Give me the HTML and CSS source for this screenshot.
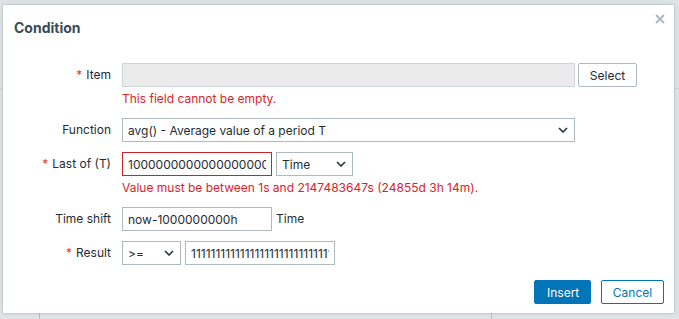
FILE: index.html
```html
<!DOCTYPE html>
<html lang="en">
<head>
    <meta charset="UTF-8">
    <title>Condition</title>
    <link rel="stylesheet" href="styles.css">
</head>
<body>
    <div class="page-bg">
        <div class="bg-rule"></div>
        <div class="bg-col bg-col-left"></div>
        <div class="bg-col bg-col-right"></div>
    </div>

    <div class="modal">
        <div class="modal-head">
            <h4>Condition</h4>
            <button class="close" type="button" title="Close">
                <svg width="10" height="10" viewBox="0 0 10 10">
                    <path d="M1 1 L9 9 M9 1 L1 9" stroke="#aab6bd" stroke-width="1.8" fill="none"/>
                </svg>
            </button>
        </div>

        <form class="form-grid">
            <label class="req">Item</label>
            <div class="field">
                <div class="line">
                    <input class="input input-item" type="text" disabled>
                    <button class="btn-alt btn-select" type="button">Select</button>
                </div>
                <div class="error">This field cannot be empty.</div>
            </div>

            <label>Function</label>
            <div class="field">
                <div class="select select-function">
                    <span>avg() - Average value of a period T</span>
                    <svg class="chev" width="10" height="6" viewBox="0 0 10 6"><path d="M1 1 L5 5 L9 1" stroke="#1f2c33" stroke-width="1.5" fill="none"/></svg>
                </div>
            </div>

            <label class="req">Last of (T)</label>
            <div class="field">
                <div class="line">
                    <input class="input input-short invalid" type="text" value="10000000000000000000000">
                    <div class="select select-time">
                        <span>Time</span>
                        <svg class="chev" width="10" height="6" viewBox="0 0 10 6"><path d="M1 1 L5 5 L9 1" stroke="#1f2c33" stroke-width="1.5" fill="none"/></svg>
                    </div>
                </div>
                <div class="error">Value must be between 1s and 2147483647s (24855d 3h 14m).</div>
            </div>

            <label>Time shift</label>
            <div class="field">
                <div class="line">
                    <input class="input input-short" type="text" value="now-1000000000h">
                    <span class="unit">Time</span>
                </div>
            </div>

            <label class="req">Result</label>
            <div class="field">
                <div class="line">
                    <div class="select select-op">
                        <span>&gt;=</span>
                        <svg class="chev" width="10" height="6" viewBox="0 0 10 6"><path d="M1 1 L5 5 L9 1" stroke="#1f2c33" stroke-width="1.5" fill="none"/></svg>
                    </div>
                    <input class="input input-short" type="text" value="111111111111111111111111111111">
                </div>
            </div>
        </form>

        <div class="modal-foot">
            <button class="btn" type="button">Insert</button>
            <button class="btn-alt btn-cancel" type="button">Cancel</button>
        </div>
    </div>
</body>
</html>
```

FILE: styles.css
```css
body {
    margin: 0;
    width: 679px;
    height: 319px;
    overflow: hidden;
    background-color: #dfe4e7;
    font-family: Inter, "Liberation Sans", Arial, sans-serif;
    font-size: 12px;
    color: #1f2c33;
    position: relative;
}
.page-bg {
    position: absolute;
    inset: 0;
}
.bg-rule {
    position: absolute;
    left: 0;
    right: 0;
    top: 88px;
    height: 1px;
    background: #cdd3d7;
}
.bg-col {
    position: absolute;
    top: 313px;
    bottom: 0;
    width: 1px;
    background: #b8c0c5;
}
.bg-col-left {
    left: 39px;
}
.bg-col-right {
    left: 491px;
}
.modal {
    position: relative;
    margin: 5px 0 0 3px;
    width: 671px;
    height: 308px;
    background: white;
    box-shadow: 0 0 0 1px rgba(0,0,0,0.06), 0 0 6px rgba(0,0,0,0.1);
    display: flex;
    flex-direction: column;
}
.modal-head {
    height: 44px;
    padding: 0 11px;
    display: flex;
    align-items: center;
    justify-content: space-between;
}
.modal-head h4 {
    margin: 0;
    font-size: 14px;
    font-weight: bold;
    color: #394b58;
}
.close {
    position: absolute;
    top: 8px;
    right: 8px;
    border: none;
    background: none;
    padding: 0;
    width: 12px;
    height: 12px;
    display: flex;
    align-items: center;
    justify-content: center;
}
.form-grid {
    margin-top: 14px;
    display: grid;
    grid-template-columns: 108px 1fr;
    column-gap: 11px;
    row-gap: 10px;
    align-items: start;
}
.form-grid label {
    text-align: right;
    line-height: 24px;
    white-space: nowrap;
}
.form-grid label.req::before {
    content: "*";
    color: #e33734;
    margin-right: 4px;
}
.line {
    display: flex;
    align-items: center;
    gap: 4px;
}
.input, .select, .btn, .btn-alt {
    box-sizing: border-box;
    height: 24px;
    font-family: inherit;
    font-size: 12px;
}
.input {
    border: 1px solid #acbbc2;
    background: white;
    color: #1f2c33;
    padding: 0 5px;
    outline: none;
}
.input:disabled {
    background: #ebebeb;
    border-color: #cdd5d9;
}
.input.invalid {
    border-color: #c8252b;
}
.input-item {
    width: 453px;
}
.input-short {
    width: 150px;
}
.select {
    border: 1px solid #acbbc2;
    background: white;
    display: flex;
    align-items: center;
    justify-content: space-between;
    padding: 0 6px 0 5px;
}
.select-function {
    width: 453px;
}
.select-time {
    width: 77px;
}
.select-op {
    width: 59px;
}
.unit {
    line-height: 24px;
}
.error {
    margin-top: 3px;
    line-height: 18px;
    color: #d9232b;
}
.btn-select {
    margin-left: -1px;
    width: 59px;
}
.btn-alt {
    border: 1px solid #acbbc2;
    border-radius: 2px;
    background: white;
    color: #1f2c33;
    padding: 0 10px;
}
.btn {
    border: 1px solid #0275b8;
    border-radius: 2px;
    background: #0275b8;
    color: white;
    padding: 0 12px;
    width: 57px;
}
.btn-cancel {
    border-color: #0275b8;
    color: #0275b8;
    width: 63px;
}
.modal-foot {
    margin-top: auto;
    padding: 0 10px 9px 0;
    display: flex;
    justify-content: flex-end;
    gap: 10px;
}
```
